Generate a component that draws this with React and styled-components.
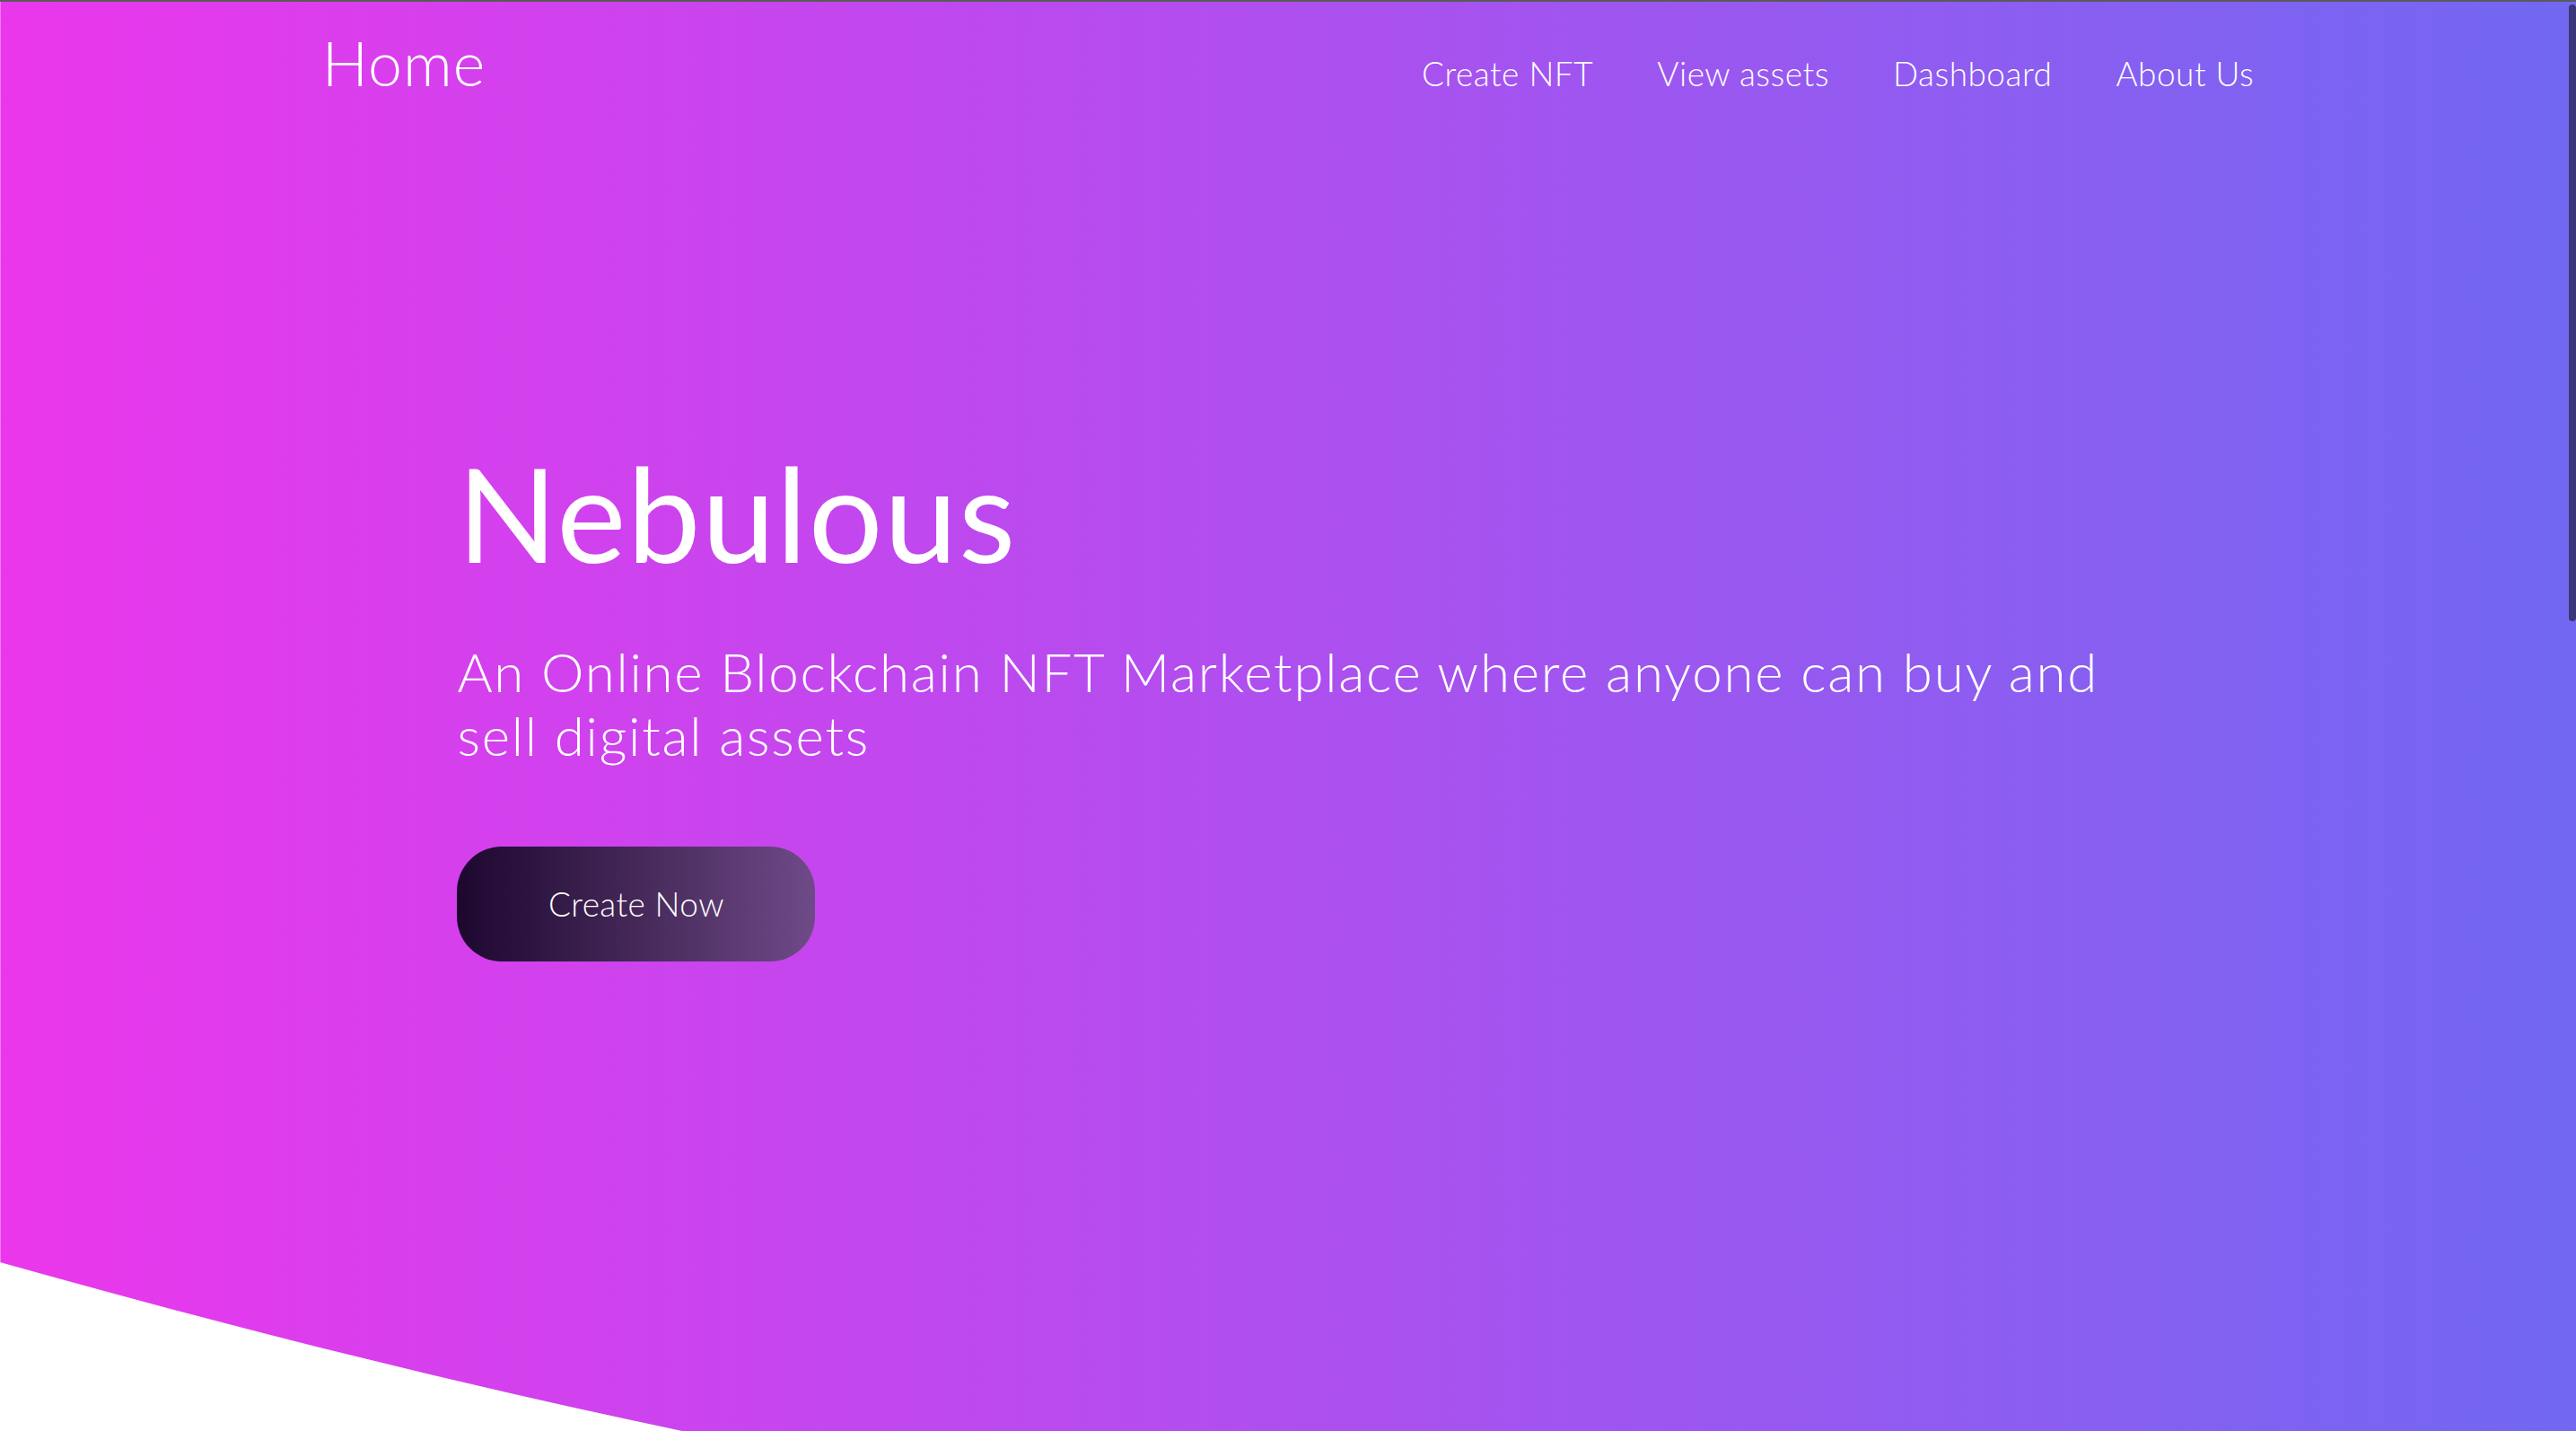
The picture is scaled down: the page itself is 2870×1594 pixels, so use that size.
import React from "react";
import styled, { createGlobalStyle } from "styled-components";

const Global = createGlobalStyle`
  html, body {
    margin: 0;
    padding: 0;
    height: 100%;
    overflow: hidden;
  }
  body {
    font-family: "Lato", "Open Sans", sans-serif;
    background: #ffffff;
  }
  * { box-sizing: border-box; }
`;

const Hero = styled.section`
  position: relative;
  height: 100vh;
  width: 100%;
  overflow: hidden;
  background: linear-gradient(90deg, #eb37ec 0%, #ac50ef 52%, #7168f2 100%);
  border-top: 2px solid #5a5a5a;
  box-shadow: inset 1px 0 0 rgba(255, 255, 255, 0.35);
  color: #ffffff;
`;

const Nav = styled.nav`
  width: 75%;
  margin: 0 auto;
  padding-top: 27px;
  display: flex;
  align-items: baseline;
  justify-content: space-between;
`;

const Brand = styled.a`
  font-size: 68px;
  line-height: 1.2;
  font-weight: 300;
  letter-spacing: 1px;
  color: #ffffff;
  text-decoration: none;
`;

const Links = styled.ul`
  list-style: none;
  margin: 0;
  padding: 0;
  display: flex;
  gap: 71px;
`;

const LinkItem = styled.li`
  font-size: 37px;
  line-height: 1.2;
  font-weight: 300;
  letter-spacing: 0.5px;
`;

const NavLink = styled.a`
  color: #ffffff;
  text-decoration: none;
`;

const Content = styled.div`
  width: 64.5%;
  margin: 372px auto 0;
  display: flex;
  flex-direction: column;
  align-items: flex-start;
`;

const Title = styled.h1`
  margin: 0;
  font-size: 146px;
  line-height: 1.2;
  font-weight: 400;
  letter-spacing: 1.5px;
`;

const Subtitle = styled.p`
  margin: 55px 0 0;
  font-size: 60px;
  line-height: 71px;
  font-weight: 300;
  letter-spacing: 1.75px;
`;

const CreateButton = styled.button`
  margin-top: 88px;
  width: 399px;
  height: 128px;
  border: none;
  border-radius: 50px;
  background: linear-gradient(90deg, #1d072f 0%, #452858 50%, #6e4b88 100%);
  color: #ffffff;
  font-family: "Lato", "Open Sans", sans-serif;
  font-size: 37px;
  font-weight: 300;
  letter-spacing: 0.4px;
  cursor: pointer;
`;

const Wave = styled.svg`
  position: absolute;
  left: 0;
  bottom: 0;
  width: 900px;
  height: 200px;
  display: block;
`;

const ScrollThumb = styled.div`
  position: absolute;
  top: 3px;
  right: 0;
  width: 8px;
  height: 687px;
  border-radius: 4px;
  background: #3b3579;
`;

export default function App() {
  return (
    <>
      <Global />
      <Hero>
        <Nav>
          <Brand href="#">Home</Brand>
          <Links>
            <LinkItem><NavLink href="#">Create NFT</NavLink></LinkItem>
            <LinkItem><NavLink href="#">View assets</NavLink></LinkItem>
            <LinkItem><NavLink href="#">Dashboard</NavLink></LinkItem>
            <LinkItem><NavLink href="#">About Us</NavLink></LinkItem>
          </Links>
        </Nav>
        <Content>
          <Title>Nebulous</Title>
          <Subtitle>
            An Online Blockchain NFT Marketplace where anyone can buy and sell digital assets
          </Subtitle>
          <CreateButton>Create Now</CreateButton>
        </Content>
        <Wave viewBox="0 0 900 200" preserveAspectRatio="none" aria-hidden="true">
          <path d="M0 12 C253 83 507 147 760 200 L900 230 L0 230 Z" fill="#ffffff" />
        </Wave>
        <ScrollThumb />
      </Hero>
    </>
  );
}
